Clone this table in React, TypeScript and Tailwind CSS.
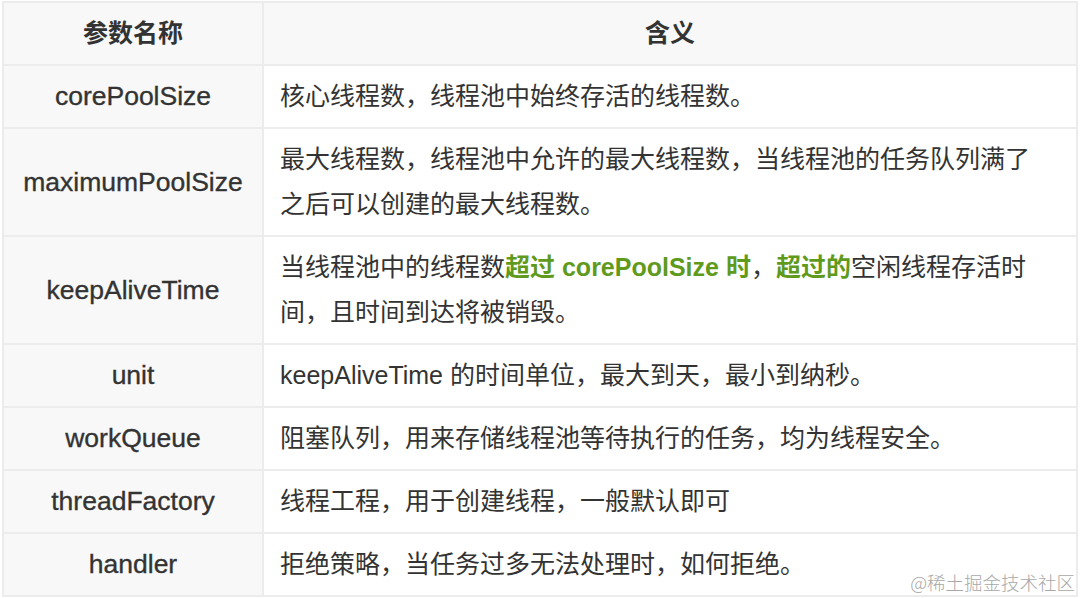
import React from "react";

const rows: { name: string; desc: React.ReactNode }[] = [
  { name: "corePoolSize", desc: "核心线程数，线程池中始终存活的线程数。" },
  {
    name: "maximumPoolSize",
    desc: (
      <>
        最大线程数，线程池中允许的最大线程数，当线程池的任务队列满了
        <br />
        之后可以创建的最大线程数。
      </>
    ),
  },
  {
    name: "keepAliveTime",
    desc: (
      <>
        当线程池中的线程数
        <span className="font-semibold text-[#5f9a1c]">超过 corePoolSize 时</span>，
        <span className="font-semibold text-[#5f9a1c]">超过的</span>空闲线程存活时
        <br />
        间，且时间到达将被销毁。
      </>
    ),
  },
  { name: "unit", desc: "keepAliveTime 的时间单位，最大到天，最小到纳秒。" },
  { name: "workQueue", desc: "阻塞队列，用来存储线程池等待执行的任务，均为线程安全。" },
  { name: "threadFactory", desc: "线程工程，用于创建线程，一般默认即可" },
  { name: "handler", desc: "拒绝策略，当任务过多无法处理时，如何拒绝。" },
];

export default function App() {
  return (
    <div
      className="relative w-[1080px] h-[598px] bg-white overflow-hidden pt-[1px] pl-[2px]"
      style={{ fontFamily: '"Liberation Sans", "Noto Sans CJK SC", sans-serif' }}
    >
      <table className="border-collapse w-[1076px] text-[25px] text-[#333333] leading-[45px]">
        <thead>
          <tr className="bg-[#f8f8f8]">
            <th className="w-[260px] border-2 border-[#ececec] py-[8px] font-bold text-center">参数名称</th>
            <th className="border-2 border-[#ececec] py-[8px] font-bold text-center">含义</th>
          </tr>
        </thead>
        <tbody>
          {rows.map((r) => (
            <tr key={r.name}>
              <td className="w-[260px] bg-[#f8f8f8] border-2 border-[#ececec] py-[8px] text-center text-[26.5px] [-webkit-text-stroke:0.35px_#333333]">
                {r.name}
              </td>
              <td className="border-2 border-[#ececec] py-[8px] pl-[16px] pr-[8px] text-left whitespace-nowrap">
                {r.desc}
              </td>
            </tr>
          ))}
        </tbody>
      </table>
      <div
        className="absolute right-[5px] bottom-[7px] text-[18.5px] text-[#a8a8a8] leading-none"
        style={{ fontFamily: '"Noto Sans CJK SC", "Liberation Serif", serif', fontWeight: 300 }}
      >
        @稀土掘金技术社区
      </div>
    </div>
  );
}
